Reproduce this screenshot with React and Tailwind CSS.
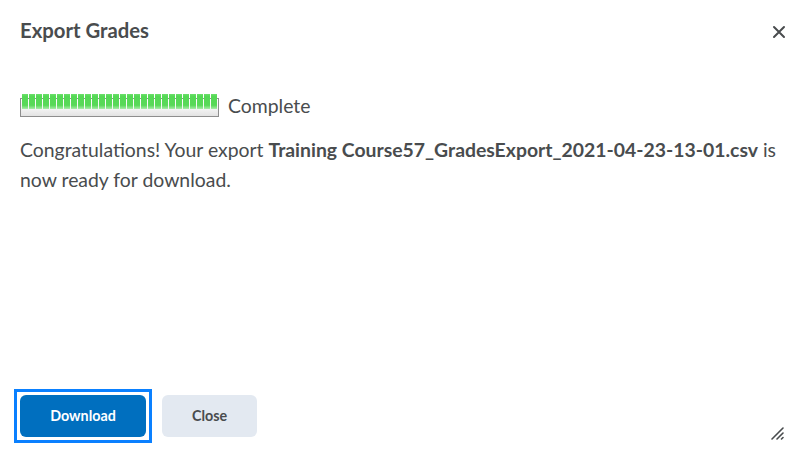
import React from "react";

function ProgressBar() {
  const segs = Array.from({ length: 28 }, (_, i) => i);
  return (
    <svg width="201" height="24" viewBox="0 0 201 24" className="block shrink-0">
      <defs>
        <linearGradient id="bg" x1="0" y1="0" x2="0" y2="1">
          <stop offset="0" stopColor="#ffffff" />
          <stop offset="0.55" stopColor="#f4f4f4" />
          <stop offset="1" stopColor="#e2e2e2" />
        </linearGradient>
        <linearGradient id="gr" x1="0" y1="0" x2="0" y2="1">
          <stop offset="0" stopColor="#6ee06e" />
          <stop offset="0.15" stopColor="#55d855" />
          <stop offset="0.75" stopColor="#58d958" />
          <stop offset="1" stopColor="#a8eca8" />
        </linearGradient>
      </defs>
      <rect x="1.5" y="4.5" width="198" height="18" fill="url(#bg)" stroke="#8e8e8e" strokeWidth="1" />
      {segs.map((i) => (
        <rect key={i} x={3 + i * 7} y={0} width={6} height={15} fill="url(#gr)" />
      ))}
    </svg>
  );
}

export default function App() {
  return (
    <div
      className="w-[800px] h-[460px] bg-white flex flex-col text-[#494c4e]"
      style={{ fontFamily: "Lato, 'Open Sans', sans-serif" }}
    >
      <div className="h-[62px] flex items-center justify-between pl-5 pr-[14px] shrink-0">
        <h1 className="text-[20.3px] font-bold leading-none -mt-[1px]">Export Grades</h1>
        <svg width="14" height="14" viewBox="0 0 14 14" className="mt-[1px]">
          <path d="M2 2 L12 12 M12 2 L2 12" stroke="#494c4e" strokeWidth="2" strokeLinecap="round" />
        </svg>
      </div>
      <div className="px-5 pt-[29px] flex-1">
        <div className="flex items-center gap-[8px] -ml-[1px]">
          <ProgressBar />
          <span className="text-[19.4px] leading-[28px] mt-[1px]">Complete</span>
        </div>
        <p className="mt-[15px] text-[19.4px] leading-[30px] w-[764px]">
          Congratulations! Your export <strong className="font-bold">Training Course57_GradesExport_2021-04-23-13-01.csv</strong> is now ready for download.
        </p>
      </div>
      <div className="flex items-end justify-between pl-[14px] pr-[16px] pb-[17px]">
        <div className="flex items-center gap-[10px]">
          <div className="border-[3px] border-[#0a80ff] p-[3px]">
            <button className="w-[126px] h-[42px] rounded-[6px] bg-[#006fbf] text-white text-[14.3px] font-bold">
              Download
            </button>
          </div>
          <button className="w-[95px] h-[42px] rounded-[6px] bg-[#e3e9f1] text-[#494c4e] text-[14.3px] font-bold">
            Close
          </button>
        </div>
        <svg width="14" height="14" viewBox="0 0 14 14" className="mb-[3px]">
          <path d="M2 13 L13 2 M7 13 L13 7 M11.5 13 L13 11.5" stroke="#494c4e" strokeWidth="1.6" strokeLinecap="round" />
        </svg>
      </div>
    </div>
  );
}
